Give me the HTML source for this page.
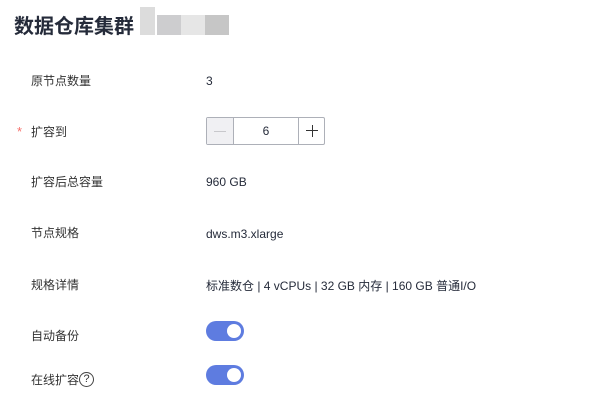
<!DOCTYPE html><html><head><meta charset="utf-8"><style>
body{margin:0;width:616px;height:403px;background:#fff;font-family:"Liberation Sans","Noto Sans CJK SC",sans-serif;color:#252b3a;position:relative;overflow:hidden}
.a{position:absolute;white-space:nowrap}
.l{left:31px;font-size:12px;color:#333}
.v{left:206px;font-size:12px;color:#252b3a}
.t{position:absolute;left:206px;width:38px;height:20px;border-radius:10px;background:#5e7ce0}
.t:after{content:"";position:absolute;right:3px;top:3px;width:14px;height:14px;border-radius:50%;background:#fff}
</style></head><body>
<div class="a" style="left:14px;top:10px;font-size:20px;font-weight:bold;color:#252b3a">数据仓库集群</div>
<div class="a" style="left:140px;top:7px;width:15px;height:28px;background:#dcdcdc"></div>
<div class="a" style="left:157px;top:15px;width:24px;height:20px;background:#cdcdcf"></div>
<div class="a" style="left:181px;top:15px;width:24px;height:20px;background:#e6e6e6"></div>
<div class="a" style="left:205px;top:15px;width:24px;height:20px;background:#c6c6c6"></div>
<div class="a l" style="top:72px">原节点数量</div><div class="a v" style="top:74px">3</div>
<div class="a" style="left:17px;top:124px;color:#f66f6a;font-size:13px">*</div>
<div class="a l" style="top:123px">扩容到</div>
<div class="a" style="left:206px;top:117px;width:117px;height:26px;border:1px solid #adb0b8;border-radius:2px;font-size:12px">
<div class="a" style="left:0;top:0;width:26px;height:26px;background:#f0f0f3;border-right:1px solid #adb0b8"><div class="a" style="left:7px;top:13px;width:12px;height:1px;background:#c8c8cc"></div></div>
<div class="a" style="left:27px;top:0;width:64px;height:26px;text-align:center;line-height:26px">6</div>
<div class="a" style="left:91px;top:0;width:26px;height:26px;border-left:1px solid #adb0b8">
<div class="a" style="left:7px;top:12px;width:12px;height:1.3px;background:#333"></div>
<div class="a" style="left:12.5px;top:7px;width:1.3px;height:12px;background:#333"></div></div>
</div>
<div class="a l" style="top:173px">扩容后总容量</div><div class="a v" style="top:175px">960 GB</div>
<div class="a l" style="top:224px">节点规格</div><div class="a v" style="top:227px">dws.m3.xlarge</div>
<div class="a l" style="top:276px">规格详情</div><div class="a v" style="top:277px">标准数仓 | 4 vCPUs | 32 GB 内存 | 160 GB 普通I/O</div>
<div class="a l" style="top:327px">自动备份</div><div class="t" style="top:321px"></div>
<div class="a l" style="top:371px">在线扩容</div>
<div class="a" style="left:79px;top:372px;width:13px;height:13px;border:1.2px solid #444;border-radius:50%;font-size:11px;line-height:13px;text-align:center;color:#333">?</div>
<div class="t" style="top:365px"></div>
</body></html>
